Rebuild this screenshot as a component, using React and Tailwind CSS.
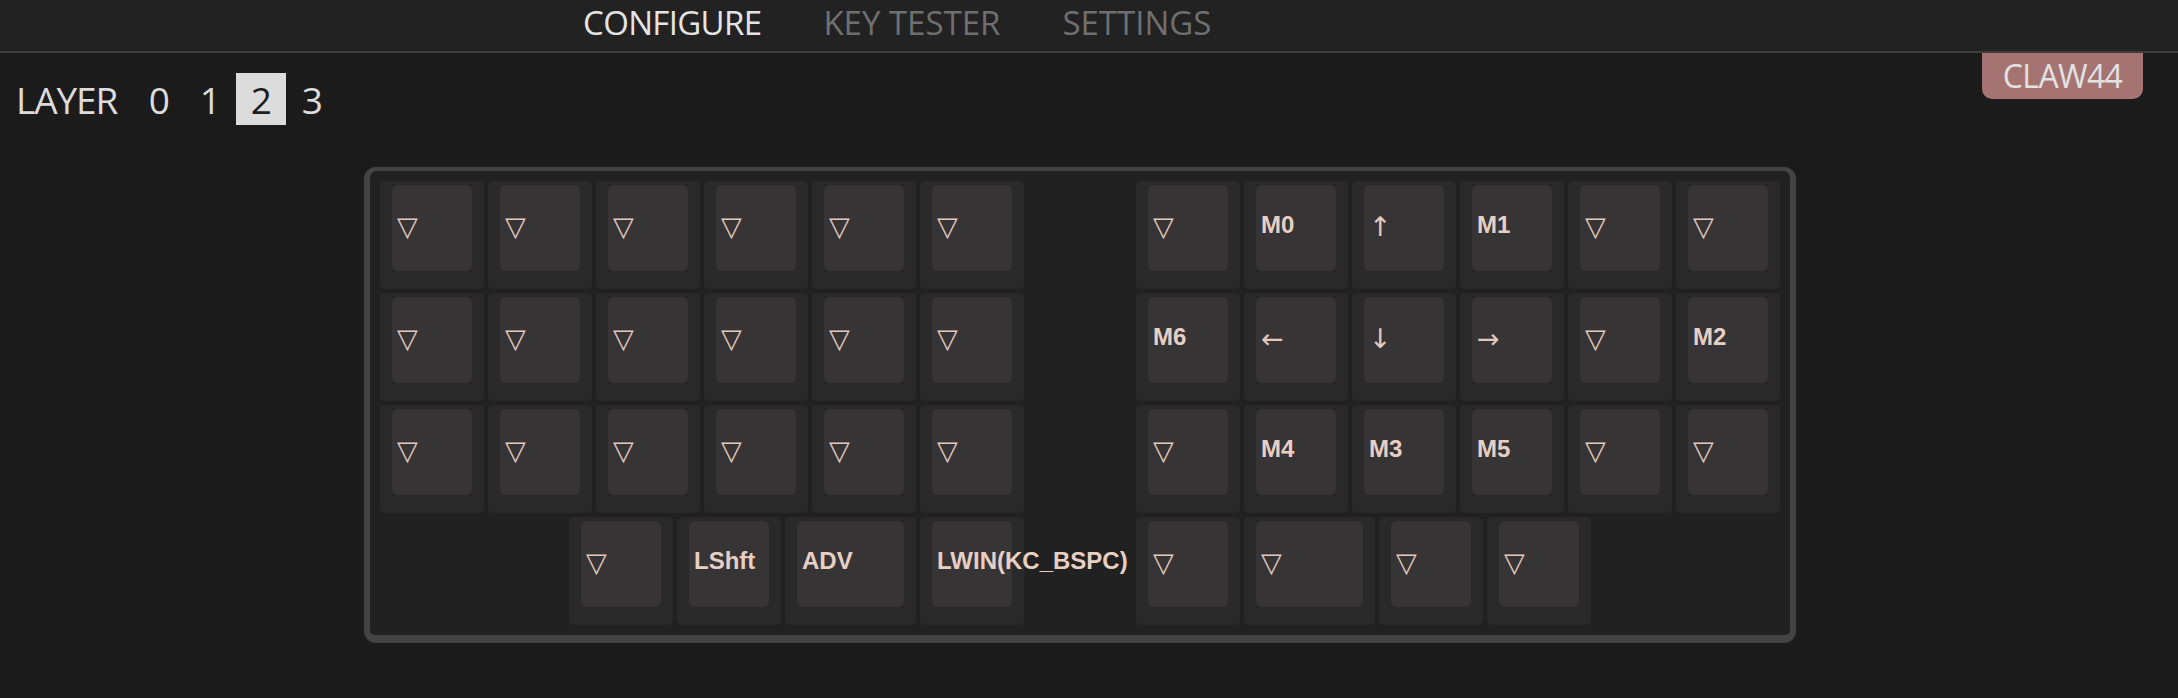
import React from 'react';

const TRI = '▽';

const rows = [
  [
    [TRI, TRI, TRI, TRI, TRI, TRI],
    [TRI, 'M0', '↑', 'M1', TRI, TRI],
  ],
  [
    [TRI, TRI, TRI, TRI, TRI, TRI],
    ['M6', '←', '↓', '→', TRI, 'M2'],
  ],
  [
    [TRI, TRI, TRI, TRI, TRI, TRI],
    [TRI, 'M4', 'M3', 'M5', TRI, TRI],
  ],
];

const thumbsLeft = [
  { label: TRI },
  { label: 'LShft' },
  { label: 'ADV', wide: true },
  { label: 'LWIN(KC_BSPC)' },
];

const thumbsRight = [
  { label: TRI },
  { label: TRI, wide: true },
  { label: TRI },
  { label: TRI },
];

const isSymbol = (label) => ['▽', '↑', '↓', '←', '→'].includes(label);

const Key = ({ label, wide }) => {
  const symbol = isSymbol(label);
  return (
    <div
      className={`${wide ? 'w-[131px]' : 'w-[104px]'} h-[108px] shrink-0 rounded-[5px] bg-[#292929] px-[12px] pt-[4px]`}
    >
      <div className="h-[86px] rounded-[6px] bg-[#363435] pl-[5px] pt-[28px]">
        {symbol ? (
          <span
            className="block whitespace-nowrap text-[27px] leading-none text-[#e3c9bd]"
            style={{ fontFamily: '"DejaVu Sans", sans-serif' }}
          >
            {label}
          </span>
        ) : (
          <span
            className="block whitespace-nowrap text-[24px] font-bold leading-none text-[#e8cfc3]"
            style={{ fontFamily: '"Liberation Sans", Arial, sans-serif' }}
          >
            {label}
          </span>
        )}
      </div>
    </div>
  );
};

const Keyboard = () => (
  <div className="rounded-[12px] border-x-[6px] border-t-4 border-b-8 border-[#434343] bg-[#212121] px-[10px] py-[10px]">
    <div className="flex flex-col gap-[4px]">
      {rows.map(([left, right], i) => (
        <div key={i} className="flex gap-[4px]">
          {left.map((l, j) => (
            <Key key={`l${j}`} label={l} />
          ))}
          <div className="w-[104px] shrink-0" />
          {right.map((l, j) => (
            <Key key={`r${j}`} label={l} />
          ))}
        </div>
      ))}
      <div className="flex gap-[4px]">
        <div className="w-[185px] shrink-0" />
        {thumbsLeft.map((k, j) => (
          <Key key={`tl${j}`} label={k.label} wide={k.wide} />
        ))}
        <div className="w-[104px] shrink-0" />
        {thumbsRight.map((k, j) => (
          <Key key={`tr${j}`} label={k.label} wide={k.wide} />
        ))}
      </div>
    </div>
  </div>
);

export default function App() {
  const sans = { fontFamily: '"Open Sans", "Noto Sans", sans-serif' };
  return (
    <div className="relative min-h-screen w-full bg-[#1c1b1c]" style={sans}>
      {/* Top nav */}
      <nav className="flex h-[53px] items-center gap-[62px] border-b-2 border-[#3e3e3e] bg-[#222222] pb-[5px] pl-[583px] text-[33px]">
        <span className="tracking-[-0.02em] text-[#e4e4e4]">CONFIGURE</span>
        <span className="text-[#6f6f6f]">KEY TESTER</span>
        <span className="text-[#6f6f6f]">SETTINGS</span>
      </nav>

      {/* Keyboard name badge */}
      <div className="absolute right-[35px] top-[53px] flex h-[46px] w-[161px] items-center justify-center rounded-b-[10px] bg-[#a57472] text-[32px] tracking-[-0.02em] text-[#e2e2e2]">
        CLAW44
      </div>

      {/* Layer selector */}
      <div className="mt-[20px] flex h-[52px] items-center pl-[16px] text-[37px] leading-none text-[#dcdcdc]">
        <span className="mr-[17px] tracking-[-0.03em]">LAYER</span>
        {[0, 1, 2, 3].map((n) => (
          <span
            key={n}
            className={`mr-[1px] flex h-[52px] w-[50px] items-center justify-center ${
              n === 2 ? 'bg-[#dcdcdc] text-[#1e1e1e]' : ''
            }`}
          >
            {n}
          </span>
        ))}
      </div>

      {/* Keyboard */}
      <div className="mt-[42px] flex justify-center pr-[18px]">
        <Keyboard />
      </div>
    </div>
  );
}
